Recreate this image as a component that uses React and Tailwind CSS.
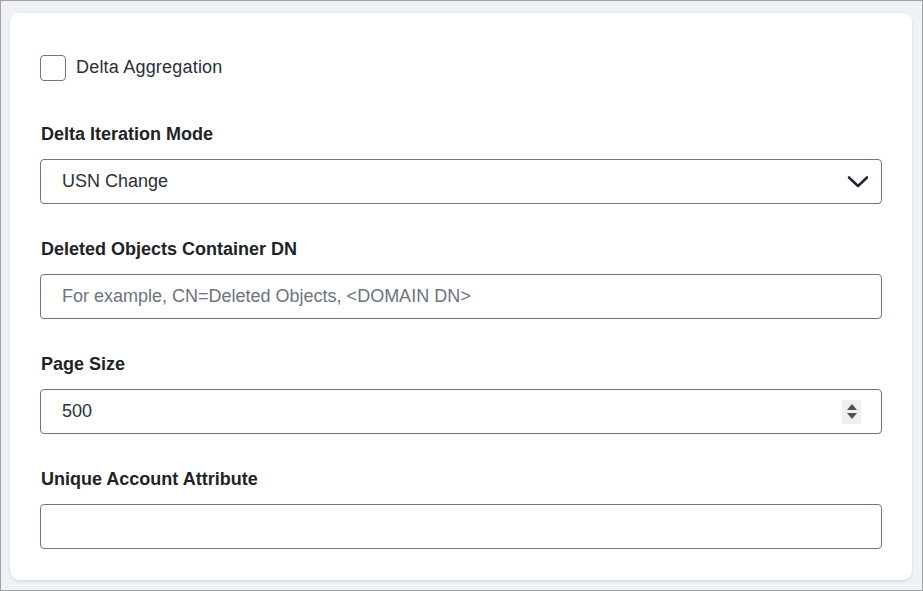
import { useState } from 'react';

const Field = ({ label, children }) => (
    <div className="flex flex-col">
        <label className="text-[18px] font-bold text-[#1f2328] leading-[24px] mb-[13px] pl-px">{label}</label>
        {children}
    </div>
);

const App = () => {
    const [checked, setChecked] = useState(false);
    const [mode] = useState('USN Change');
    const [pageSize, setPageSize] = useState('500');

    return (
        <div className="w-[923px] h-[591px] border border-[#a3a3a3] bg-[#eff2f5] pt-[12px] pl-[9px] pr-[10px] pb-[10px]" style={{ fontFamily: '"Liberation Sans", Arial, sans-serif' }}>
            <div className="h-full bg-white rounded-[9px] shadow-[0_1px_3px_rgba(0,0,0,0.12)] pt-[41px] pl-[30px] pr-[30px] flex flex-col gap-[41px]">
                <label className="flex items-center gap-[10px] cursor-pointer">
                    <span
                        onClick={() => setChecked(!checked)}
                        className={`w-[26px] h-[26px] rounded-[4px] border ${checked ? 'bg-[#0e6ad4] border-[#0e6ad4]' : 'border-[#6b7684] bg-white'}`}
                    />
                    <span className="text-[18px] text-[#2b3038] tracking-[0.2px]">Delta Aggregation</span>
                </label>

                <div className="flex flex-col gap-[33px]">
                    <Field label="Delta Iteration Mode">
                        <div className="h-[45px] border border-[#6b7684] rounded-[4px] flex items-center justify-between pl-[21px] pr-[12px]">
                            <span className="text-[18px] text-[#2b3038]">{mode}</span>
                            <svg width="22" height="14" viewBox="0 0 22 14" fill="none">
                                <path d="M2 2.5L11 11L20 2.5" stroke="#222831" strokeWidth="2.6" strokeLinecap="round" strokeLinejoin="round" />
                            </svg>
                        </div>
                    </Field>

                    <Field label="Deleted Objects Container DN">
                        <input
                            className="h-[45px] border border-[#6b7684] rounded-[4px] px-[21px] text-[18px] text-[#2b3038] placeholder:text-[#6c737c] outline-none"
                            placeholder="For example, CN=Deleted Objects, <DOMAIN DN>"
                        />
                    </Field>

                    <Field label="Page Size">
                        <div className="h-[45px] border border-[#6b7684] rounded-[4px] flex items-center pl-[21px] pr-[20px]">
                            <input
                                value={pageSize}
                                onChange={(e) => setPageSize(e.target.value)}
                                className="flex-1 text-[18px] text-[#2b3038] outline-none"
                            />
                            <div className="w-[19px] h-[24px] bg-[#efefef] flex flex-col items-center justify-center gap-[3px]">
                                <svg width="10" height="6" viewBox="0 0 10 6"><path d="M5 0L10 6H0Z" fill="#505050" /></svg>
                                <svg width="10" height="6" viewBox="0 0 10 6"><path d="M0 0H10L5 6Z" fill="#505050" /></svg>
                            </div>
                        </div>
                    </Field>

                    <Field label="Unique Account Attribute">
                        <input className="h-[45px] border border-[#6b7684] rounded-[4px] px-[21px] text-[18px] text-[#2b3038] outline-none" />
                    </Field>
                </div>
            </div>
        </div>
    );
};

export default App;
